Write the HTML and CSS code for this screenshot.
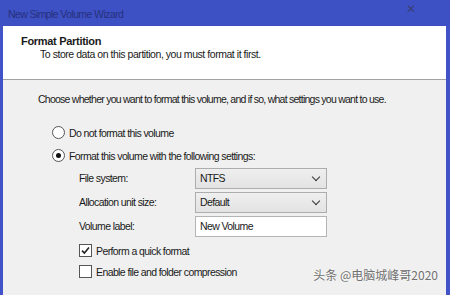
FILE: index.html
```html
<!DOCTYPE html>
<html lang="en">

<head>
    <meta charset="UTF-8">
    <title>New Simple Volume Wizard</title>
    <link rel="stylesheet" href="styles.css">
</head>

<body>
    <div class="window">
        <div class="titlebar">
            <span class="title">New Simple Volume Wizard</span>
            <span class="close">&#x2715;</span>
        </div>

        <div class="header">
            <div class="heading">Format Partition</div>
            <div class="subheading">To store data on this partition, you must format it first.</div>
        </div>

        <div class="content">
            <p class="intro">Choose whether you want to format this volume, and if so, what settings you want to use.</p>

            <div class="options">
                <label class="option">
                    <span class="radio"></span>
                    Do not format this volume
                </label>
                <label class="option">
                    <span class="radio checked"></span>
                    Format this volume with the following settings:
                </label>
            </div>

            <div class="fields">
                <span class="field-label">File system:</span>
                <div class="select">NTFS<span class="chevron"></span></div>

                <span class="field-label">Allocation unit size:</span>
                <div class="select">Default<span class="chevron"></span></div>

                <span class="field-label">Volume label:</span>
                <div class="textbox">New Volume</div>
            </div>

            <div class="checks">
                <label class="check">
                    <span class="box">
                        <svg width="9" height="9" viewBox="0 0 9 9"><path d="M1 4.6 L3.4 7 L8 1.6" fill="none" stroke="#222" stroke-width="1.6"/></svg>
                    </span>
                    Perform a quick format
                </label>
                <label class="check">
                    <span class="box"></span>
                    Enable file and folder compression
                </label>
            </div>
        </div>

        <div class="watermark">头条 @电脑城峰哥2020</div>
    </div>
</body>

</html>
```

FILE: styles.css
```css
html {
    font-family: "Liberation Sans", Arial, sans-serif;
    font-size: 10.5px;
    letter-spacing: -0.6px;
}

body {
    margin: 0;
    width: 450px;
    height: 295px;
    overflow: hidden;
}

.window {
    position: relative;
    height: 295px;
    border-left: 3px solid #4153c6;
    border-right: 4px solid #4153c6;
    background: #f0f0f0;
    color: #1a1a1a;
}

/* title bar */

.titlebar {
    height: 26px;
    background: #3d50c4;
    display: flex;
    align-items: center;
    justify-content: space-between;
    margin: 0 -4px 0 -3px;
    padding: 0 34px 0 8px;
}

.title {
    color: #27307c;
    font-size: 10.5px;
    margin-top: 1px;
}

.close {
    color: #3a3f78;
    font-size: 12px;
    letter-spacing: 0;
    margin-top: -8px;
}

/* white header */

.header {
    height: 54px;
    background: #fff;
    border-bottom: 1px solid #a2a2a2;
    padding: 9px 0 0 18px;
    box-sizing: border-box;
}

.heading {
    font-weight: bold;
    font-size: 11px;
    letter-spacing: -0.3px;
}

.subheading {
    padding-left: 19px;
    margin-top: 1px;
    letter-spacing: -0.45px;
}

/* body */

.content {
    padding-left: 35px;
}

.intro {
    margin: 0;
    padding-top: 13px;
    letter-spacing: -0.75px;
}

.options {
    margin-top: 16px;
}

.option {
    display: flex;
    align-items: center;
    gap: 4px;
    height: 23px;
    padding-left: 14px;
}

.radio {
    width: 11px;
    height: 11px;
    border: 1px solid #555;
    border-radius: 50%;
    background: #fff;
    position: relative;
}

.radio.checked::after {
    content: "";
    position: absolute;
    left: 3px;
    top: 3px;
    width: 5px;
    height: 5px;
    border-radius: 50%;
    background: #111;
}

.fields {
    display: grid;
    grid-template-columns: 116px 132px;
    grid-auto-rows: 22px;
    row-gap: 2px;
    align-items: center;
    padding-left: 41px;
}

.select,
.textbox {
    height: 21px;
    box-sizing: border-box;
    border: 1px solid #adadad;
    display: flex;
    align-items: center;
    padding-left: 4px;
    position: relative;
}

.select {
    background: linear-gradient(#efefef, #e3e3e3);
}

.textbox {
    background: #fff;
    border-color: #b4b4b4;
}

.chevron {
    position: absolute;
    right: 7px;
    top: 5px;
    width: 5px;
    height: 5px;
    border-right: 1.5px solid #333;
    border-bottom: 1.5px solid #333;
    transform: rotate(45deg);
}

.checks {
    margin-top: 3px;
}

.check {
    display: flex;
    align-items: center;
    gap: 4px;
    height: 21px;
    padding-left: 41px;
}

.box {
    width: 11px;
    height: 11px;
    border: 1px solid #555;
    background: #fff;
    display: flex;
    align-items: center;
    justify-content: center;
}

.watermark {
    position: absolute;
    right: 8px;
    bottom: 12px;
    font-family: "Noto Sans CJK SC", sans-serif;
    font-size: 12px;
    letter-spacing: 0;
    color: #707070;
    text-shadow: 0 0 2px #fff;
}
```
